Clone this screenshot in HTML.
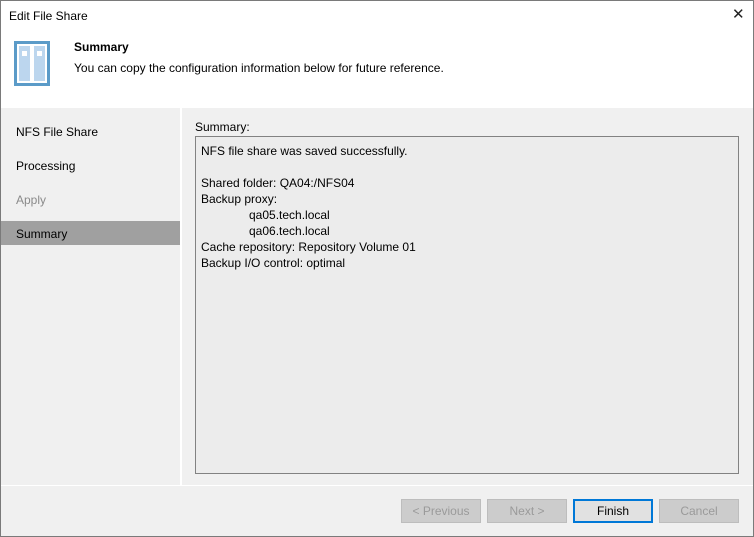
<!DOCTYPE html>
<html><head><style>
*{margin:0;padding:0;box-sizing:border-box}
body{width:754px;height:537px;overflow:hidden;background:#fff;font-family:"Liberation Sans","DejaVu Sans",sans-serif;font-size:12px;color:#000;position:relative}
.win{position:absolute;left:0;top:0;width:754px;height:537px;border:1px solid #7a7a7a;background:#f0f0f0}
.title{position:absolute;left:0;top:0;width:752px;height:107px;background:#fff}
.t{position:absolute;left:8px;top:8px;font-size:12px}
.x{position:absolute;left:731px;top:4px;font-size:15px;font-weight:100;color:#222}
.h1{position:absolute;left:73px;top:39px;font-weight:bold}
.h2{position:absolute;left:73px;top:60px}
.nav{position:absolute;left:0;top:107px;width:179px;height:378px;background:#f0f0f0}
.sep{position:absolute;left:179px;top:107px;width:2px;height:378px;background:#fff}
.n{position:absolute;left:15px;font-size:12px}
.sel{position:absolute;left:0;top:221px;width:179px;height:24px;background:#a0a0a0}
.box{position:absolute;left:194px;top:135px;width:544px;height:338px;background:#ececec;border:1px solid #828282;padding:6px 5px;line-height:16px}
.hsep{position:absolute;left:0;top:484px;width:752px;height:1px;background:#fff}
.btn{position:absolute;top:498px;width:80px;height:24px;border:1px solid #bdbdbd;background:#cccccc;color:#9a9a9a;text-align:center;line-height:22px}
</style></head><body>
<div class="win">
<div class="title">
<div class="t">Edit File Share</div>
<div class="x">✕</div>
<svg style="position:absolute;left:13px;top:40px" width="36" height="45"><rect x="0" y="0" width="36" height="45" fill="#5b9bc8"/><rect x="3" y="3" width="30" height="39" fill="#fff"/><rect x="5" y="5" width="11" height="35" fill="#bcd6ee"/><rect x="20" y="5" width="11" height="35" fill="#bcd6ee"/><rect x="8" y="10" width="5" height="5" fill="#fff"/><rect x="23" y="10" width="5" height="5" fill="#fff"/></svg>
<div class="h1">Summary</div>
<div class="h2">You can copy the configuration information below for future reference.</div>
</div>
<div class="nav">
<div class="sel" style="top:113px"></div>
<div class="n" style="top:17px">NFS File Share</div>
<div class="n" style="top:51px">Processing</div>
<div class="n" style="top:85px;color:#8a8a8a">Apply</div>
<div class="n" style="top:119px">Summary</div>
</div>
<div class="sep"></div>
<div style="position:absolute;left:194px;top:119px">Summary:</div>
<div class="box">NFS file share was saved successfully.<br><br>Shared folder: QA04:/NFS04<br>Backup proxy:<br><span style="padding-left:48px">qa05.tech.local</span><br><span style="padding-left:48px">qa06.tech.local</span><br>Cache repository: Repository Volume 01<br>Backup I/O control: optimal</div>
<div class="hsep"></div>
<div class="btn" style="left:400px">&lt; Previous</div>
<div class="btn" style="left:486px">Next &gt;</div>
<div class="btn" style="left:572px;border:2px solid #0078d7;background:#e1e1e1;color:#000;line-height:20px">Finish</div>
<div class="btn" style="left:658px">Cancel</div>
</div>
</body></html>
